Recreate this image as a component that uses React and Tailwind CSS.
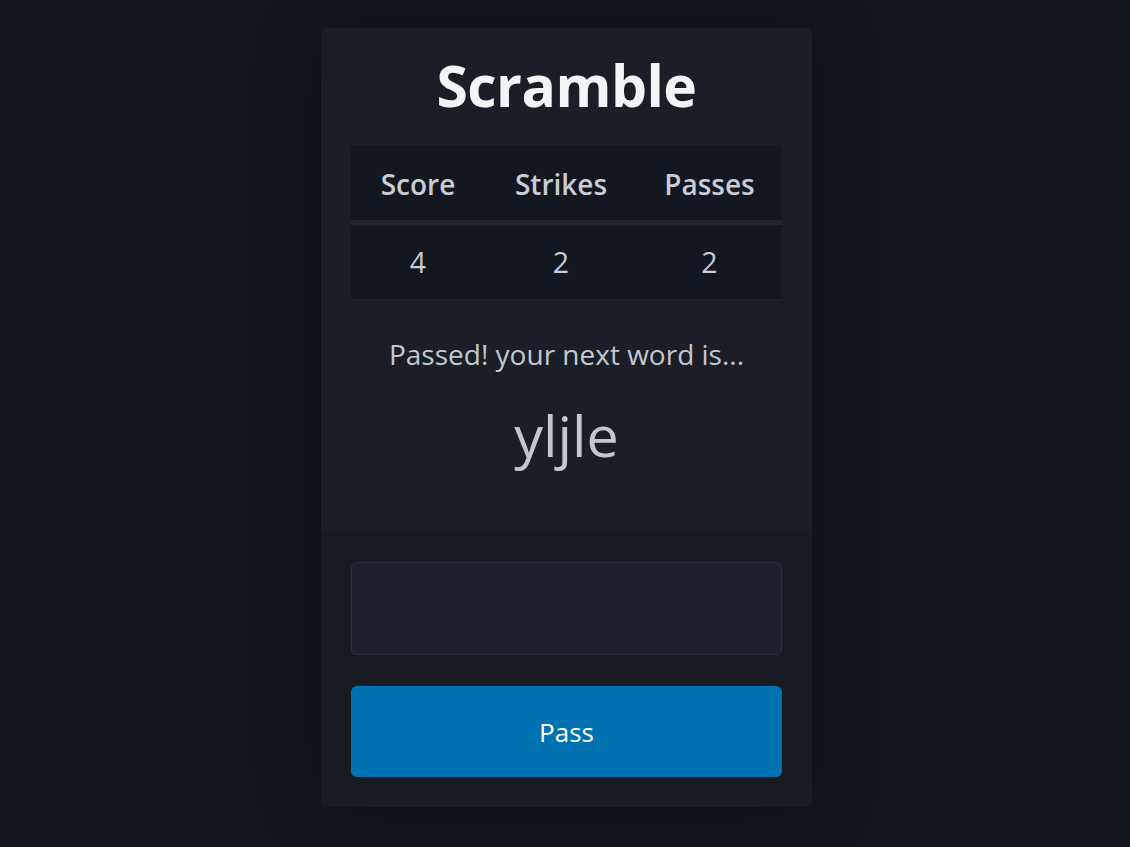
export default function App() {
  const font = { fontFamily: '"Open Sans", "Noto Sans", sans-serif' };
  return (
    <div className="min-h-screen w-full bg-[#13161f] flex justify-center pt-[28px] pl-[3px]" style={font}>
      <div className="w-[491px] h-[779px] rounded-md bg-[#1b1e26] shadow-[0_0_70px_rgba(0,0,0,0.3)] overflow-hidden flex flex-col">
        <div className="px-[30px] bg-[#1b1e26] h-[503px] flex flex-col">
          <h1 className="h-[117px] flex items-center justify-center text-[57px] font-bold text-[#f3f4f6] leading-none tracking-[-0.5px] pb-[3px]">
            Scramble
          </h1>
          <div className="bg-[#131720]">
            <div className="grid grid-cols-[134px_152px_145px] h-[80px] items-center text-center text-[28px] font-semibold text-[#c9ccd4] border-b-[5px] border-[#222631] pt-[2px]">
              <div>Score</div>
              <div>Strikes</div>
              <div>Passes</div>
            </div>
            <div className="grid grid-cols-[134px_152px_145px] h-[75px] items-center text-center text-[28.5px] text-[#c9ccd4] border-b border-[#222631] pt-[1px]">
              <div>4</div>
              <div>2</div>
              <div>2</div>
            </div>
          </div>
          <p className="mt-[34px] text-center text-[28px] text-[#c3c7d0] leading-[40px]">
            Passed! your next word is...
          </p>
          <p className="mt-[26px] text-center text-[57.5px] text-[#c3c7d0] leading-[70px]">
            yljle
          </p>
        </div>
        <div className="flex-1 bg-[#181b23] px-[30px] pt-[31px] flex flex-col gap-[31px]">
          <input
            type="text"
            className="h-[93px] w-full rounded-md bg-[#1e212b] border border-[#2c303a] outline-none text-[#c3c7d0] text-[28px] px-4"
          />
          <button className="h-[91px] w-full rounded-md bg-[#0072b1] text-white text-[26px] pt-[1px]">
            Pass
          </button>
        </div>
      </div>
    </div>
  );
}
